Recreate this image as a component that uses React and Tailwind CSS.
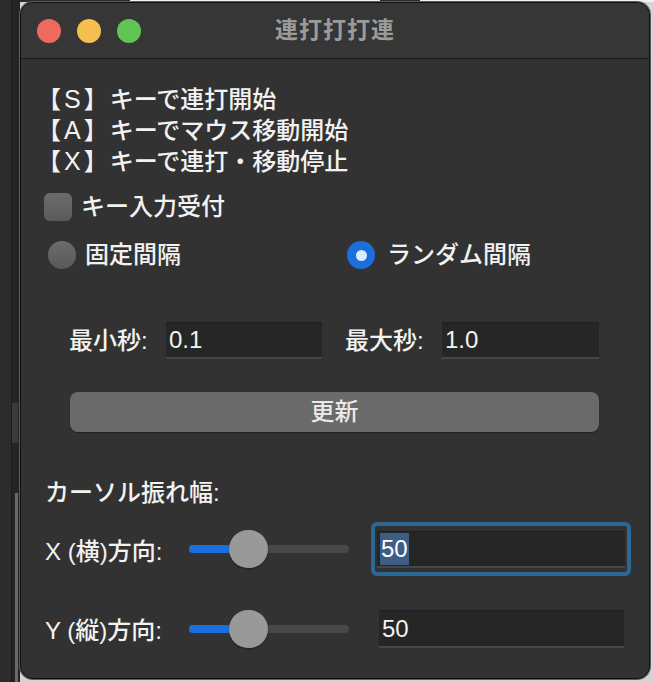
import React from 'react';

function TrafficLights() {
  return (
    <div className="flex items-center gap-[16px] pl-[16px]">
      <span className="w-[24px] h-[24px] rounded-full bg-[#ed6a5e]" />
      <span className="w-[24px] h-[24px] rounded-full bg-[#f5bf4f]" />
      <span className="w-[24px] h-[24px] rounded-full bg-[#61c454]" />
    </div>
  );
}

function Entry({ value, selected, className = '' }) {
  return (
    <div
      className={`h-[37px] bg-[#262626] border-t border-t-[#1f1f1f] border-b-2 border-b-[#474747] flex items-center pl-[3px] ${className}`}
    >
      {selected ? (
        <span className="bg-[#3d5d87] text-white leading-[32px] px-[1px]">{value}</span>
      ) : (
        <span className="text-[#f2f2f2]">{value}</span>
      )}
    </div>
  );
}

function Slider({ fill, knob }) {
  return (
    <div className="relative w-[160px] h-[8px] rounded-full bg-[#484848] shrink-0">
      <div className="absolute left-0 top-0 h-full rounded-full bg-[#1c6fe0]" style={{ width: fill }} />
      <div
        className="absolute top-[-15px] w-[39px] h-[38px] rounded-full bg-[#999999] shadow-[0_1px_2px_rgba(0,0,0,0.4)]"
        style={{ left: knob }}
      />
    </div>
  );
}

function KeyLine({ k, children }) {
  return (
    <div>
      <span className="mr-[2px]">
        【<span className="px-[3px] text-[25px]">{k}</span>】
      </span>
      {children}
    </div>
  );
}

export default function App() {
  return (
    <div className="w-[654px] h-[682px] flex bg-[#2a2a2a] overflow-hidden font-['Liberation_Sans','Noto_Sans_CJK_JP',sans-serif] text-[24px] font-medium text-[#f2f2f2]">
      {/* desktop strip behind the window */}
      <div className="w-[20px] h-full flex shrink-0">
        <div className="w-[12px] h-full bg-[#2c2c2c] border-r border-[#1b1b1b]" />
        <div className="w-[8px] h-full bg-[#242424] flex flex-col pt-[403px]">
          <div className="h-[40px] w-[6px] bg-[#3a3a3a]" />
          <div className="mt-[50px] h-[190px] w-[3px] ml-[3px] bg-[#6a6a6a]" />
        </div>
      </div>

      <div className="w-[634px] h-full flex flex-col shrink-0 bg-[#d4d4d4]">
        <div className="h-[2px] flex shrink-0">
          <div className="w-[110px] bg-[#2a2a2a]" />
          <div className="w-[250px] bg-[#f2f2f2]" />
          <div className="w-[40px] bg-[#2a2a2a]" />
          <div className="flex-1 bg-[#f0f0f0]" />
        </div>

        <div className="w-[630px] h-[677px] rounded-[13px] bg-[#323232] border border-[#0f0f0f] shadow-[0_0_0_1px_#5d5d5d] overflow-hidden flex flex-col">
          {/* title bar */}
          <div className="relative h-[56px] shrink-0 bg-[#363636] border-b border-[#1b1b1b] flex items-center">
            <TrafficLights />
            <div className="absolute inset-0 flex items-center justify-center text-[#9b9b9b] font-bold text-[23px] tracking-[1px]">
              連打打打連
            </div>
          </div>

          {/* body */}
          <div className="flex flex-col pl-[24px] pt-[25px]">
            <div className="flex flex-col leading-[31px] ml-[-8px]">
              <KeyLine k="S">キーで連打開始</KeyLine>
              <KeyLine k="A">キーでマウス移動開始</KeyLine>
              <KeyLine k="X">キーで連打・移動停止</KeyLine>
            </div>

            <div className="flex items-center h-[30px] mt-[15px] ml-[-1px]">
              <span className="w-[28px] h-[28px] rounded-[6px] bg-gradient-to-b from-[#6c6c6c] to-[#5a5a5a]" />
              <span className="ml-[9px]">キー入力受付</span>
            </div>

            <div className="flex items-center h-[30px] mt-[18px]">
              <div className="w-[302px] flex items-center pl-[3px]">
                <span className="w-[28px] h-[28px] rounded-full bg-gradient-to-b from-[#6c6c6c] to-[#595959]" />
                <span className="ml-[9px]">固定間隔</span>
              </div>
              <div className="flex items-center">
                <span className="w-[28px] h-[28px] rounded-full bg-[#1b6fdc] flex items-center justify-center">
                  <span className="w-[11px] h-[11px] rounded-full bg-[#dcedff]" />
                </span>
                <span className="ml-[12px]">ランダム間隔</span>
              </div>
            </div>

            <div className="flex items-center mt-[52px] pl-[24px]">
              <span className="w-[97px]">最小秒:</span>
              <Entry value="0.1" className="w-[156px]" />
              <span className="ml-[23px] w-[97px]">最大秒:</span>
              <Entry value="1.0" className="w-[157px]" />
            </div>

            <div className="mt-[33px] ml-[25px] w-[529px] h-[40px] rounded-[8px] bg-[#6a6a6a] shadow-[0_1px_1px_rgba(0,0,0,0.35)] flex items-center justify-center text-[#e9e9e9]">
              更新
            </div>

            <div className="mt-[46px] leading-[30px]">カーソル振れ幅:</div>

            <div className="flex items-center mt-[14px] h-[54px]">
              <span className="w-[144px] pt-[6px]">X (横)方向:</span>
              <Slider fill={50} knob={40} />
              <div className="ml-[22px] w-[260px] h-[54px] rounded-[6px] border-[4px] border-[#2b6995] p-[2px] flex flex-col justify-center">
                <Entry value="50" selected className="w-full" />
              </div>
            </div>

            <div className="flex items-center mt-[34px] h-[38px]">
              <span className="w-[144px] pt-[4px]">Y (縦)方向:</span>
              <Slider fill={50} knob={40} />
              <Entry value="50" className="ml-[30px] w-[245px] h-[38px]" />
            </div>
          </div>
        </div>
      </div>
    </div>
  );
}
